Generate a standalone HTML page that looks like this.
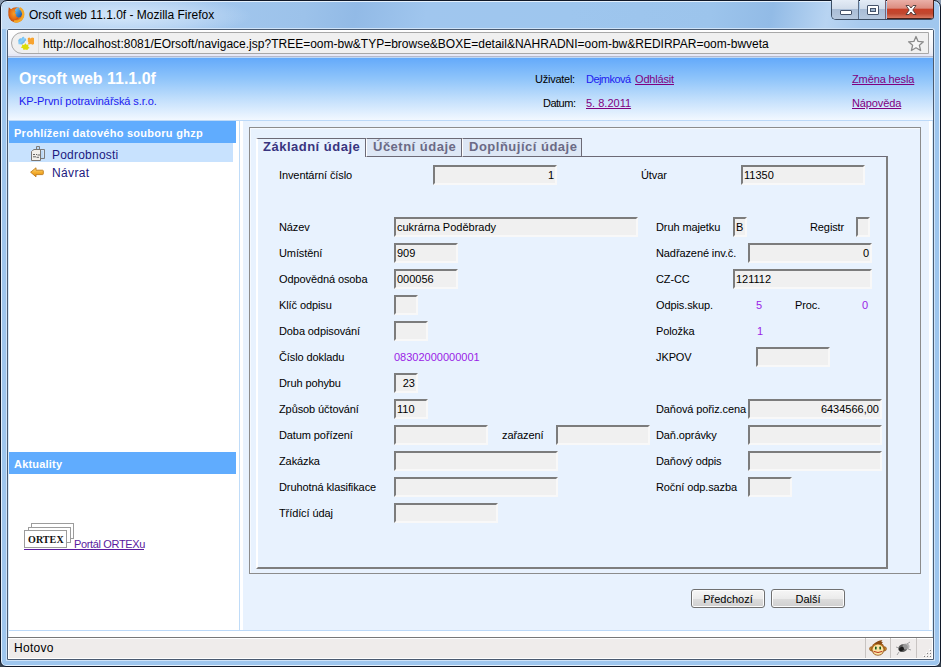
<!DOCTYPE html>
<html><head><meta charset="utf-8">
<style>
*{margin:0;padding:0;box-sizing:border-box}
html,body{width:941px;height:667px;overflow:hidden;background:linear-gradient(180deg,#8a9ab0,#3a4450);font-family:"Liberation Sans",sans-serif}
.a{position:absolute}
#win{position:absolute;left:0;top:0;width:941px;height:667px;border:1px solid #101828;border-radius:7px 7px 6px 6px;
 background:#9ec6ee;box-shadow:inset 0 0 0 1px #e4f0fc;overflow:hidden}
#titlebar{left:1px;top:1px;width:937px;height:27px;border-radius:6px 6px 0 0;
 background:
 radial-gradient(ellipse 130px 22px at 120px 14px,rgba(214,232,250,0.95) 0%,rgba(200,222,246,0.6) 60%,rgba(158,198,238,0) 100%),
 linear-gradient(100deg,#c4dcf4 0px,#b0d0f2 60px,#a6caf0 140px,#9cc2ea 300px,#92bae6 350px,#a0c6ee 420px,#9ec6ee 560px,#9cc4ec 700px,#92bbe6 760px,#b8d4f2 815px,#a8caee 850px,#9ec6ee 941px)}
.ttl{font-size:12px;color:#000;white-space:nowrap}
#frame{left:7px;top:29px;width:927px;height:631px;border:1px solid #4a5a70;border-radius:2px 2px 0 0;background:#fff;box-shadow:0 0 0 1px #cfe3f8}
#toolbar{left:8px;top:30px;width:925px;height:28px;
 background:linear-gradient(180deg,#ffffff 0%,#f6f7fb 50%,#e6e8f2 100%)}
#urlbox{left:11px;top:32px;width:918px;height:22px;border:1px solid #a8a8a8;border-radius:11px 0 0 11px;background:#f0f0f0}
#content{left:8px;top:58px;width:925px;height:579px;background:#fff}
#header{left:8px;top:58px;width:925px;height:62px;background:linear-gradient(180deg,#64aafa 0%,#8ec4fa 33%,#c4e0fc 68%,#f2f8ff 100%)}
.hl{font-size:11px;white-space:nowrap}
.lnk{color:#800080;text-decoration:underline}
.bar{background:#60acfe;color:#fff;font-weight:bold;font-size:11px;white-space:nowrap}
.lbl{font-size:11px;color:#000;white-space:nowrap;letter-spacing:-0.1px}
.inp{position:absolute;height:20px;background:#f0f0f0;border-style:solid;border-width:2px;border-color:#7c7c7c #f8f8f8 #f8f8f8 #7c7c7c;font-size:11px;line-height:16px;padding:0 1px;white-space:nowrap;overflow:hidden}
.r{text-align:right}
.pur{color:#9a22e6;font-size:11px;white-space:nowrap}
#status{left:8px;top:637px;width:925px;height:22px;border-top:1px solid #777;background:#efeceb}
.btn{border:1px solid #707070;border-radius:3px;background:linear-gradient(180deg,#f6f6f6 0%,#ebebeb 50%,#dddddd 51%,#cfcfcf 100%);box-shadow:inset 0 0 0 1px #fcfcfc;font-size:11px;text-align:center;line-height:19px;color:#000}
</style></head><body>
<div id="win">
 <div id="titlebar" class="a"></div>
</div>
<!-- title -->
<svg class="a" style="left:8px;top:7px" width="17" height="16" viewBox="0 0 17 16">
 <defs><radialGradient id="fo" cx="0.55" cy="0.45" r="0.6"><stop offset="0" stop-color="#f6a028"/><stop offset="0.65" stop-color="#e46c14"/><stop offset="1" stop-color="#c04808"/></radialGradient>
 <linearGradient id="fb" x1="0" y1="0" x2="1" y2="1"><stop offset="0" stop-color="#8ad8fa"/><stop offset="0.5" stop-color="#3a8ad0"/><stop offset="1" stop-color="#1a4a98"/></linearGradient></defs>
 <circle cx="8.2" cy="7.9" r="7.7" fill="url(#fo)"/>
 <ellipse cx="10.3" cy="5.8" rx="4" ry="5" fill="url(#fb)"/>
 <path d="M0.8 0.3 L3 2.2 L5.2 1.8 L6.8 3 L7.8 4.6 L6.8 6 L8.4 7.4 L7.8 9 L9.4 10 L10.6 11.6 L6 14 L1 10.5 L0.3 5Z" fill="url(#fo)"/>
 <path d="M11.5 1.2 C15.5 3 16.5 8.5 13.5 12 C11.5 14.5 8 15 6 14" fill="none" stroke="#f4a828" stroke-width="2.4"/>
</svg>
<div class="a ttl" style="left:29px;top:7px;line-height:16px">Orsoft web 11.1.0f - Mozilla Firefox</div>
<!-- window buttons -->
<div class="a" style="left:831px;top:0;width:103px;height:20px;border:1px solid #3c4e64;border-top:none;border-right-color:#4a2018;border-radius:0 0 4px 5px;overflow:hidden">
 <div class="a" style="left:0;top:0;width:27px;height:19px;background:linear-gradient(180deg,#e4ecf6 0%,#d2ddeb 45%,#a9bdd6 50%,#b6c8de 100%);border-right:1px solid #5c6e86"></div>
 <div class="a" style="left:28px;top:0;width:26px;height:19px;background:linear-gradient(180deg,#e4ecf6 0%,#d2ddeb 45%,#a9bdd6 50%,#b6c8de 100%);border-right:1px solid #7a6070"></div>
 <div class="a" style="left:55px;top:0;width:48px;height:19px;border-bottom:1px solid #4a2018;background:linear-gradient(180deg,#eab0a8 0%,#dc8c80 45%,#c84028 52%,#c04830 75%,#d87860 100%)"></div>
 <div class="a" style="left:8px;top:10px;width:12px;height:5px;background:#fff;border:1px solid #45536a;border-radius:1px"></div>
 <div class="a" style="left:35px;top:5px;width:12px;height:10px;background:#fff;border:1px solid #45536a;border-radius:1px"><div class="a" style="left:2px;top:2px;width:6px;height:4px;background:#9fb4cc;border:1px solid #45536a"></div></div>
 <svg class="a" style="left:73px;top:5px" width="12" height="10" viewBox="0 0 12 10"><path d="M1 0.5 L4 0.5 L6 3 L8 0.5 L11 0.5 L7.8 5 L11 9.5 L8 9.5 L6 7 L4 9.5 L1 9.5 L4.2 5Z" fill="#fff" stroke="#4a3a3a" stroke-width="0.9"/></svg>
</div>
<!-- toolbar -->
<div id="frame" class="a"></div>
<div id="toolbar" class="a"></div>
<div id="urlbox" class="a"></div>
<div class="a" style="left:8px;top:54px;width:925px;height:2px;background:#e6e8f6"></div>
<div class="a" style="left:8px;top:56px;width:925px;height:1px;background:#b4b8cc"></div>
<div class="a" style="left:8px;top:57px;width:925px;height:1px;background:#bcd8f6"></div>
<div class="a" style="left:38px;top:33px;width:1px;height:20px;background:#dcdcdc"></div>
<svg class="a" style="left:18px;top:36px" width="17" height="15" viewBox="0 0 17 15">
 <defs><linearGradient id="pb" x1="0" y1="0" x2="1" y2="1"><stop offset="0" stop-color="#4aa8ec"/><stop offset="0.5" stop-color="#8ad0fa"/><stop offset="1" stop-color="#4a8ac8"/></linearGradient></defs>
 <path d="M0.3 4 L2 2.2 L3.5 2.6 L4.5 1 L6 0.8 L6.5 2.2 L8 2.5 L8.2 4.5 L7 5 L6.5 6.5 L5 7.5 L4 8.5 L2 8.3 L0.5 8.2Z" fill="url(#pb)"/>
 <path d="M9.8 2 L11.5 1.6 L12.5 2.4 L14 1.6 L16 2 L16 8 L14.5 8.7 L13 8 L11 8.6 L10 8 L10.5 6.5 L9.8 5.5Z" fill="#f8a430"/>
 <path d="M4 8.5 L6 9 L7.5 7.2 L8.5 8.8 L10.5 8.5 L10.2 10.5 L11.7 12 L10 12.8 L9.5 14 L7 13.5 L5.5 14 L5 12.3 L2.7 11.5 L4.2 10.3Z" fill="#dcdc08"/>
</svg>
<div class="a ttl" style="left:43px;top:36px;line-height:16px;color:#000">http://localhost:8081/EOrsoft/navigace.jsp?TREE=oom-bw&amp;TYP=browse&amp;BOXE=detail&amp;NAHRADNI=oom-bw&amp;REDIRPAR=oom-bwveta</div>
<svg class="a" style="left:907px;top:35px" width="18" height="18" viewBox="0 0 18 18"><path d="M9 1.5 L11.1 6.4 L16.4 6.8 L12.4 10.3 L13.6 15.5 L9 12.8 L4.4 15.5 L5.6 10.3 L1.6 6.8 L6.9 6.4Z" fill="#f6f6f6" stroke="#8a8a8a" stroke-width="1.3" stroke-linejoin="round"/></svg>

<!-- page -->
<div id="content" class="a"></div>
<div id="header" class="a"></div>
<div class="a" style="left:8px;top:120px;width:925px;height:1px;background:#bcd9f8"></div>
<div class="a" style="left:19px;top:70px;font-size:16px;font-weight:bold;color:#fff;white-space:nowrap;line-height:18px">Orsoft web 11.1.0f</div>
<div class="a hl" style="left:19px;top:95px;color:#2020f0;line-height:13px;letter-spacing:-0.08px">KP-První potravinářská s.r.o.</div>
<div class="a hl" style="left:535px;top:73px;line-height:13px;color:#000;letter-spacing:-0.25px">Uživatel:</div>
<div class="a hl" style="left:586px;top:73px;line-height:13px;color:#2020f0;letter-spacing:-0.55px">Dejmková</div>
<div class="a hl lnk" style="left:635px;top:73px;line-height:13px;letter-spacing:-0.17px">Odhlásit</div>
<div class="a hl" style="left:543px;top:97px;line-height:13px;color:#000;letter-spacing:-0.5px">Datum:</div>
<div class="a hl lnk" style="left:586px;top:97px;line-height:13px">5. 8.2011</div>
<div class="a hl lnk" style="left:852px;top:73px;line-height:13px;letter-spacing:-0.12px">Změna hesla</div>
<div class="a hl lnk" style="left:852px;top:97px;line-height:13px;letter-spacing:-0.12px">Nápověda</div>

<!-- left panel -->
<div class="a bar" style="left:9px;top:121px;width:227px;height:22px;line-height:24px;padding-left:5px;letter-spacing:0.27px">Prohlížení datového souboru ghzp</div>
<div class="a" style="left:9px;top:143px;width:224px;height:19px;background:#c8e2fe"></div>
<div class="a" style="left:52px;top:148px;font-size:12px;color:#1c1a80;line-height:15px;letter-spacing:0.22px;white-space:nowrap">Podrobnosti</div>
<svg class="a" style="left:30px;top:145px" width="16" height="17" viewBox="0 0 16 17">
 <path d="M6.5 1.5 L9.5 1.5 L9.5 4.5 L14.5 4.5 L14.5 13.5 L6.5 13.5Z" fill="#bcd8f4" stroke="#7c7c7c" stroke-width="1"/>
 <path d="M10.5 5.5 L13.5 5.5 L13.5 12.5" fill="none" stroke="#f4f8fc" stroke-width="0.8" stroke-dasharray="1 1"/>
 <path d="M2.5 5.5 L4 4.5 L10.5 4.5 L10.5 15.5 L1.5 15.5 L1.5 6.5Z" fill="#f2f0ea" stroke="#7a7672" stroke-width="1"/>
 <path d="M3 9.5 L5 9.5 M6 9.5 L7 9.5 M7.5 10 L10 10 M3 11.8 L6 11.8 M6.5 12.3 L9 12.3" stroke="#555" stroke-width="0.9"/>
</svg>
<div class="a" style="left:52px;top:166px;font-size:12px;color:#1c1a80;line-height:15px;letter-spacing:0.35px;white-space:nowrap">Návrat</div>
<svg class="a" style="left:29px;top:166px" width="16" height="12" viewBox="0 0 16 12">
 <defs><linearGradient id="ag" x1="0" y1="0" x2="0" y2="1"><stop offset="0" stop-color="#fde08a"/><stop offset="0.5" stop-color="#f6b030"/><stop offset="1" stop-color="#e08a10"/></linearGradient></defs>
 <path d="M1.6 6.2 L7 1.8 L7 4.2 L13.5 4.2 Q14.3 4.2 14.3 5 L14.3 7.8 Q14.3 8.6 13.5 8.6 L7 8.6 L7 10.8Z" fill="url(#ag)" stroke="#c07a18" stroke-width="0.9" stroke-linejoin="round"/>
</svg>

<!-- ortex -->
<div class="a" style="left:31px;top:523px;width:43px;height:16px;border:1px solid #9c9c9c;background:#fff"></div>
<div class="a" style="left:28px;top:527px;width:43px;height:16px;border:1px solid #9c9c9c;background:#fff"></div>
<div class="a" style="left:24px;top:530px;width:43px;height:18px;border:1px solid #9c9c9c;background:#fff"></div>
<div class="a" style="left:28px;top:534px;font-family:'Liberation Serif',serif;font-weight:bold;font-size:10px;line-height:11px;color:#111;letter-spacing:0.1px">ORTEX</div>
<div class="a" style="left:74px;top:538px;font-size:11px;line-height:13px;color:#5a1a9e;white-space:nowrap;letter-spacing:-0.35px">Portál ORTEXu</div>
<div class="a" style="left:24px;top:549px;width:120px;height:1px;background:#5a1a9e"></div>
<div class="a bar" style="left:9px;top:452px;width:227px;height:22px;line-height:24px;padding-left:5px;letter-spacing:0.2px">Aktuality</div>
<div class="a" style="left:239px;top:121px;width:1px;height:509px;background:#c0dcf8"></div>
<div class="a" style="left:8px;top:630px;width:925px;height:1px;background:#bcd9f8"></div>

<!-- main -->
<div class="a" style="left:243px;top:121px;width:686px;height:509px;background:#e8f2fe"></div>

<!-- form -->
<div class="a" style="left:249px;top:127px;width:672px;height:447px;border:1px solid #8c8c8c;"></div>
<div class="a" style="left:250px;top:128px;width:670px;height:445px;border-left:1px solid #f6faff;border-top:1px solid #f6faff"></div>
<div class="a" style="left:256px;top:156px;width:632px;height:413px;border-left:2px solid #fff;border-right:2px solid #7e7e7e;border-bottom:2px solid #7e7e7e;border-top:1px solid #6c6a76"></div>
<div class="a" style="left:256px;top:138px;width:110px;height:19px;border-top:1px solid #6c6a76;border-left:2px solid #fff;border-right:1px solid #6c6a76;background:#e8f2fe;font-weight:bold;font-size:13px;color:#39357f;padding-left:5px;line-height:16px;letter-spacing:0.5px;white-space:nowrap">Základní údaje</div>
<div class="a" style="left:366px;top:138px;width:96px;height:19px;border-top:1px solid #6c6a76;border-left:1px solid #fff;border-right:1px solid #6c6a76;border-bottom:1px solid #6c6a76;background:#dde7f5;font-weight:bold;font-size:13px;color:#6b6a85;padding-left:6px;line-height:16px;letter-spacing:0.5px;white-space:nowrap">Účetní údaje</div>
<div class="a" style="left:462px;top:138px;width:120px;height:19px;border-top:1px solid #6c6a76;border-left:1px solid #fff;border-right:1px solid #6c6a76;border-bottom:1px solid #6c6a76;background:#dde7f5;font-weight:bold;font-size:13px;color:#6b6a85;padding-left:6px;line-height:16px;letter-spacing:0.5px;white-space:nowrap">Doplňující údaje</div>
<div class="a lbl" style="left:279px;top:169px;line-height:13px">Inventární číslo</div>
<div class="inp r" style="left:433px;top:165px;width:124px">1</div>
<div class="a lbl" style="left:641px;top:169px;line-height:13px">Útvar</div>
<div class="inp" style="left:741px;top:165px;width:124px">11350</div>
<div class="a lbl" style="left:279px;top:221px;line-height:13px">Název</div>
<div class="inp" style="left:394px;top:217px;width:244px">cukrárna Poděbrady</div>
<div class="a lbl" style="left:656px;top:221px;line-height:13px">Druh majetku</div>
<div class="inp" style="left:733px;top:217px;width:14px">B</div>
<div class="a lbl" style="left:810px;top:221px;line-height:13px">Registr</div>
<div class="inp" style="left:856px;top:217px;width:14px"></div>
<div class="a lbl" style="left:279px;top:247px;line-height:13px">Umístění</div>
<div class="inp" style="left:394px;top:243px;width:64px">909</div>
<div class="a lbl" style="left:656px;top:247px;line-height:13px">Nadřazené inv.č.</div>
<div class="inp r" style="left:748px;top:243px;width:124px">0</div>
<div class="a lbl" style="left:279px;top:273px;line-height:13px">Odpovědná osoba</div>
<div class="inp" style="left:394px;top:269px;width:64px">000056</div>
<div class="a lbl" style="left:656px;top:273px;line-height:13px">CZ-CC</div>
<div class="inp" style="left:733px;top:269px;width:139px">121112</div>
<div class="a lbl" style="left:279px;top:299px;line-height:13px">Klíč odpisu</div>
<div class="inp" style="left:394px;top:295px;width:24px"></div>
<div class="a lbl" style="left:656px;top:299px;line-height:13px">Odpis.skup.</div>
<div class="a pur" style="left:756px;top:299px;line-height:13px">5</div>
<div class="a lbl" style="left:795px;top:299px;line-height:13px">Proc.</div>
<div class="a pur" style="left:862px;top:299px;line-height:13px">0</div>
<div class="a lbl" style="left:279px;top:325px;line-height:13px">Doba odpisování</div>
<div class="inp" style="left:394px;top:321px;width:34px"></div>
<div class="a lbl" style="left:656px;top:325px;line-height:13px">Položka</div>
<div class="a pur" style="left:757px;top:325px;line-height:13px">1</div>
<div class="a lbl" style="left:279px;top:351px;line-height:13px">Číslo dokladu</div>
<div class="a pur" style="left:394px;top:351px;line-height:13px">08302000000001</div>
<div class="a lbl" style="left:656px;top:351px;line-height:13px">JKPOV</div>
<div class="inp" style="left:756px;top:347px;width:74px"></div>
<div class="a lbl" style="left:279px;top:377px;line-height:13px">Druh pohybu</div>
<div class="inp r" style="left:394px;top:373px;width:24px">23</div>
<div class="a lbl" style="left:279px;top:403px;line-height:13px">Způsob účtování</div>
<div class="inp" style="left:394px;top:399px;width:34px">110</div>
<div class="a lbl" style="left:656px;top:403px;line-height:13px">Daňová pořiz.cena</div>
<div class="inp r" style="left:748px;top:399px;width:134px">6434566,00</div>
<div class="a lbl" style="left:279px;top:429px;line-height:13px">Datum pořízení</div>
<div class="inp" style="left:394px;top:425px;width:94px"></div>
<div class="a lbl" style="left:502px;top:429px;line-height:13px">zařazení</div>
<div class="inp" style="left:556px;top:425px;width:94px"></div>
<div class="a lbl" style="left:656px;top:429px;line-height:13px">Daň.oprávky</div>
<div class="inp" style="left:748px;top:425px;width:134px"></div>
<div class="a lbl" style="left:279px;top:455px;line-height:13px">Zakázka</div>
<div class="inp" style="left:394px;top:451px;width:164px"></div>
<div class="a lbl" style="left:656px;top:455px;line-height:13px">Daňový odpis</div>
<div class="inp" style="left:748px;top:451px;width:134px"></div>
<div class="a lbl" style="left:279px;top:481px;line-height:13px">Druhotná klasifikace</div>
<div class="inp" style="left:394px;top:477px;width:164px"></div>
<div class="a lbl" style="left:656px;top:481px;line-height:13px">Roční odp.sazba</div>
<div class="inp" style="left:748px;top:477px;width:44px"></div>
<div class="a lbl" style="left:279px;top:507px;line-height:13px">Třídící údaj</div>
<div class="inp" style="left:394px;top:503px;width:104px"></div>
<div class="a btn" style="left:691px;top:589px;width:74px;height:19px">Předchozí</div>
<div class="a btn" style="left:771px;top:589px;width:74px;height:19px">Další</div>
<div class="a" style="left:8px;top:121px;width:1px;height:516px;background:#d4eafc"></div>
<div class="a" style="left:932px;top:121px;width:1px;height:516px;background:#d4eafc"></div>
<!-- status -->
<div id="status" class="a"></div>
<div class="a" style="left:8px;top:638px;width:1px;height:21px;background:#fff"></div>
<div class="a" style="left:8px;top:638px;width:925px;height:1px;background:#fff"></div>
<div class="a" style="left:14px;top:641px;font-size:12px;line-height:14px;color:#000;letter-spacing:0.3px">Hotovo</div>
<div class="a" style="left:865px;top:638px;width:1px;height:20px;background:#c8c4c2"></div>
<div class="a" style="left:890px;top:638px;width:1px;height:20px;background:#c8c4c2"></div>
<div class="a" style="left:916px;top:638px;width:1px;height:20px;background:#c8c4c2"></div>
<svg class="a" style="left:869px;top:639px" width="18" height="18" viewBox="0 0 18 18">
 <circle cx="2.6" cy="9.8" r="2.1" fill="#c88428" stroke="#8a5014" stroke-width="0.6"/>
 <circle cx="15.4" cy="9.8" r="2.1" fill="#c88428" stroke="#8a5014" stroke-width="0.6"/>
 <ellipse cx="9" cy="9.9" rx="6.3" ry="6.4" fill="#b8701c" stroke="#7a4210" stroke-width="0.6"/>
 <path d="M5.5 5 Q8 1.5 13.5 1 Q12 2.2 12.6 3 Q13.6 3 14 3.6 Q12.5 4.2 12.5 5.5Z" fill="#8a4a12"/>
 <ellipse cx="9" cy="10.6" rx="5.4" ry="5.2" fill="#fbe4a4"/>
 <rect x="6" y="7.6" width="1.6" height="3" rx="0.7" fill="#145a1c"/>
 <rect x="10.4" y="7.6" width="1.6" height="3" rx="0.7" fill="#145a1c"/>
 <path d="M4.6 12.4 Q9 14.6 13.4 12.4" fill="none" stroke="#b8301a" stroke-width="1"/>
</svg>
<svg class="a" style="left:895px;top:640px" width="18" height="16" viewBox="0 0 18 16">
 <ellipse cx="8" cy="8" rx="5" ry="3.8" fill="#5a5a5a" transform="rotate(-25 8 8)"/>
 <ellipse cx="11" cy="6.5" rx="3.5" ry="3" fill="#a8a8a8" opacity="0.8"/>
 <ellipse cx="6.5" cy="9" rx="2.6" ry="2" fill="#1a1a1a" transform="rotate(-25 6.5 9)"/>
 <path d="M1 7 L4 8 M4 12 L2 15 M13 9 L16 10 M12 4 L15 2" stroke="#909090" stroke-width="0.8"/>
</svg>
<svg class="a" style="left:922px;top:648px" width="10" height="10" viewBox="0 0 10 10" shape-rendering="crispEdges">
 <g fill="#fff"><rect x="7" y="1" width="1" height="1"/><rect x="4" y="4" width="1" height="1"/><rect x="7" y="4" width="1" height="1"/><rect x="1" y="7" width="1" height="1"/><rect x="4" y="7" width="1" height="1"/><rect x="7" y="7" width="1" height="1"/></g>
 <g fill="#808080"><rect x="8" y="2" width="1" height="1"/><rect x="5" y="5" width="1" height="1"/><rect x="8" y="5" width="1" height="1"/><rect x="2" y="8" width="1" height="1"/><rect x="5" y="8" width="1" height="1"/><rect x="8" y="8" width="1" height="1"/></g>
</svg>
<div class="a" style="left:932px;top:638px;width:1px;height:21px;background:#fff"></div>
<div class="a" style="left:8px;top:658px;width:925px;height:1px;background:#fff"></div>
</body></html>
